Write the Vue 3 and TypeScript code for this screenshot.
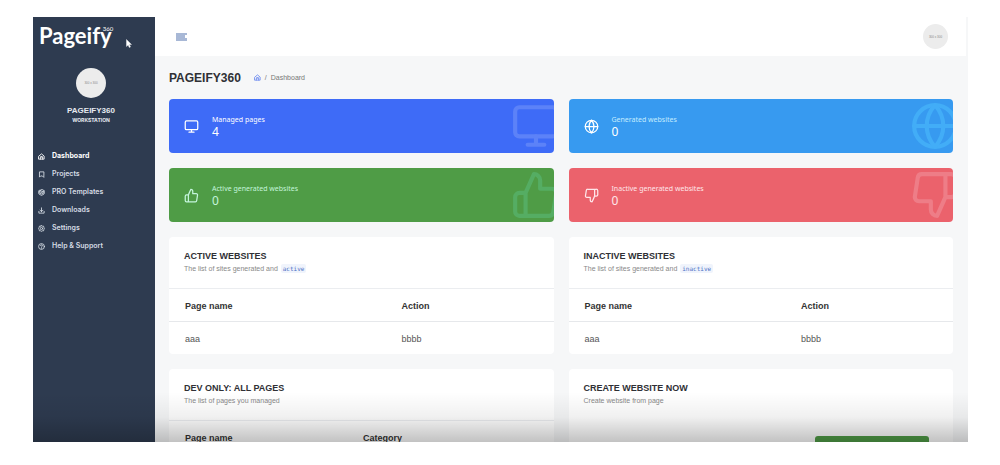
<script setup lang="ts">
interface NavItem {
  label: string
  icon: string
}

interface Stat {
  label: string
  value: number
  tone: string
  icon: string
}

interface Panel {
  title: string
  text: string
  code?: string
  columns?: string[]
  rows?: string[][]
  wide?: boolean
}

const icons: Record<string, string> = {
  home: '<path d="M3 10.5 12 3l9 7.500V21H3z"/><path d="M8 21v-5a4 4 0 0 1 8 0v5M9 14h6"/>',
  bookmark: '<path d="M19 21l-4-4H9l-4 4V3h14z"/>',
  box: '<path d="M12 2 3 7v10l9 5 9-5V7z"/><path d="M3 7l9 5 9-5M3 12l9 5 9-5M7 4.500l9 5"/>',
  download: '<path d="M3 15v6h18v-6"/><path d="M7 11l5 5 5-5M12 16V3"/>',
  settings:
    '<path d="M12 2l3 2 4 0 1 4 2 4-2 4-1 4-4 0-3 2-3-2-4 0-1-4-2-4 2-4 1-4 4 0z"/><circle cx="12" cy="12" r="4"/>',
  help: '<circle cx="12" cy="12" r="10"/><path d="M9 9a3 3 0 1 1 4 3c-1 .5-1 1-1 2M12 17v1"/>',
  monitor: '<rect x="2" y="3" width="20" height="14" rx="2"/><path d="M8 21h8M12 17v4"/>',
  globe:
    '<circle cx="12" cy="12" r="10"/><path d="M2 12h20M12 2a15.300 15.300 0 0 1 4 10 15.300 15.300 0 0 1-4 10 15.300 15.300 0 0 1-4-10 15.300 15.300 0 0 1 4-10z"/>',
  up: '<path d="M14 9V5a3 3 0 0 0-3-3l-4 9v11h11.280a2 2 0 0 0 2-1.700l1.380-9a2 2 0 0 0-2-2.300zM7 22H4a2 2 0 0 1-2-2v-7a2 2 0 0 1 2-2h3"/>',
  down: '<path d="M10 15v4a3 3 0 0 0 3 3l4-9V2H5.720a2 2 0 0 0-2 1.700l-1.380 9a2 2 0 0 0 2 2.300zM17 2h2.670A2.310 2.310 0 0 1 22 4v7a2.310 2.310 0 0 1-2.330 2H17"/>',
}

const nav: NavItem[] = [
  { label: 'Dashboard', icon: 'home' },
  { label: 'Projects', icon: 'bookmark' },
  { label: 'PRO Templates', icon: 'box' },
  { label: 'Downloads', icon: 'download' },
  { label: 'Settings', icon: 'settings' },
  { label: 'Help & Support', icon: 'help' },
]

const stats: Stat[] = [
  { label: 'Managed pages', value: 4, tone: 'blue', icon: 'monitor' },
  { label: 'Generated websites', value: 0, tone: 'sky', icon: 'globe' },
  { label: 'Active generated websites', value: 0, tone: 'green', icon: 'up' },
  { label: 'Inactive generated websites', value: 0, tone: 'red', icon: 'down' },
]

const panels: Panel[] = [
  {
    title: 'ACTIVE WEBSITES',
    text: 'The list of sites generated and',
    code: 'active',
    columns: ['Page name', 'Action'],
    rows: [['aaa', 'bbbb']],
  },
  {
    title: 'INACTIVE WEBSITES',
    text: 'The list of sites generated and',
    code: 'inactive',
    columns: ['Page name', 'Action'],
    rows: [['aaa', 'bbbb']],
  },
  {
    title: 'DEV ONLY: ALL PAGES',
    text: 'The list of pages you managed',
    columns: ['Page name', 'Category'],
    rows: [],
    wide: true,
  },
  { title: 'CREATE WEBSITE NOW', text: 'Create website from page' },
]
</script>

<template>
  <div class="stage">
    <div class="app">
      <aside class="sidebar">
        <a class="logo" href="#">Pageify<sup>360</sup></a>
        <div class="profile">
          <span class="avatar large">300 x 300</span>
          <strong class="name">PAGEIFY360</strong>
          <span class="role">WORKSTATION</span>
        </div>
        <nav class="nav">
          <a v-for="(item, i) in nav" :key="item.label" href="#" :class="{ active: i === 0 }">
            <svg class="line" viewBox="0 0 24 24" aria-hidden="true" v-html="icons[item.icon]"></svg>
            {{ item.label }}
          </a>
        </nav>
      </aside>

      <div class="main">
        <header class="topbar">
          <button class="menu" type="button" aria-label="Toggle menu">
            <svg viewBox="0 0 11 8" aria-hidden="true">
              <path d="M0 0h11v2H9v1h2v0H9v2h2v3H0z" opacity=".9" />
            </svg>
          </button>
          <span class="avatar">300 x 300</span>
        </header>

        <main class="content">
          <div class="heading">
            <h1>PAGEIFY360</h1>
            <nav class="crumbs" aria-label="Breadcrumb">
              <a href="#" aria-label="Home">
                <svg class="line" viewBox="0 0 24 24" aria-hidden="true" v-html="icons.home"></svg>
              </a>
              <span>/</span>
              <span>Dashboard</span>
            </nav>
          </div>

          <div class="grid">
            <section v-for="s in stats" :key="s.label" class="stat" :class="s.tone">
              <svg class="line small" viewBox="0 0 24 24" aria-hidden="true" v-html="icons[s.icon]"></svg>
              <div>
                <div class="label">{{ s.label }}</div>
                <div class="value">{{ s.value }}</div>
              </div>
              <svg class="line ghost" viewBox="0 0 24 24" aria-hidden="true" v-html="icons[s.icon]"></svg>
            </section>

            <section v-for="p in panels" :key="p.title" class="panel">
              <div class="panel-head" :class="{ ruled: p.columns }">
                <h2>{{ p.title }}</h2>
                <p>
                  {{ p.text }} <code v-if="p.code">{{ p.code }}</code>
                </p>
              </div>
              <table v-if="p.columns" :class="{ wide: p.wide }">
                <thead>
                  <tr>
                    <th v-for="c in p.columns" :key="c" scope="col">{{ c }}</th>
                  </tr>
                </thead>
                <tbody>
                  <tr v-for="(r, i) in p.rows" :key="i">
                    <td v-for="c in r" :key="c">{{ c }}</td>
                  </tr>
                </tbody>
              </table>
              <div v-else class="panel-action">
                <button class="create" type="button" aria-label="Create website"></button>
              </div>
            </section>
          </div>
        </main>
      </div>

      <div class="shade"></div>
      <svg class="pointer" viewBox="0 0 6 9" aria-hidden="true">
        <path d="M.5.5v7l1.600-1.400 1.200 2.400 1.200-.6-1.200-2.300h2.200z" />
      </svg>
    </div>
  </div>
</template>

<style>
body {
  background: #fff;
}
</style>

<style scoped>
.stage {
  box-sizing: border-box;
  height: 100vh;
  padding: 17px 32px 23px 33px;
  font-family: "Liberation Sans", Arial, sans-serif;
  color: #333;
}
.app {
  position: relative;
  display: flex;
  height: 100%;
  overflow: hidden;
  background: #f6f7f8;
}
a {
  color: inherit;
  text-decoration: none;
}
.line {
  fill: none;
  stroke: currentColor;
  stroke-width: 2;
  stroke-linecap: round;
  stroke-linejoin: round;
  flex: none;
}

/* Sidebar */
.sidebar {
  flex: none;
  width: 122px;
  background: #2e3b50;
  color: #e6eaf0;
}
.logo {
  display: flex;
  height: 39px;
  padding-left: 6px;
  font: 700 22px/37px Lato, sans-serif;
  color: #fff;
}
.logo sup {
  margin-left: -9px;
  font: 6px/24px Lato, sans-serif;
}
.profile {
  display: flex;
  flex-direction: column;
  align-items: center;
  padding: 12px 6px 22px 0;
}
.avatar {
  display: flex;
  align-items: center;
  justify-content: center;
  width: 25px;
  height: 25px;
  border-radius: 50%;
  background: #ececec;
  color: #888;
  font-size: 3px;
}
.avatar.large {
  width: 30px;
  height: 30px;
}
.name {
  margin-top: 8px;
  font-size: 8px;
  line-height: 10px;
}
.role {
  font: 700 5px/9px Inter, sans-serif;
}
.nav a {
  display: flex;
  align-items: center;
  gap: 7px;
  height: 18px;
  padding-left: 5px;
  font: 600 7px/18px Inter, sans-serif;
  color: #d5dbe4;
}
.nav a.active {
  font-weight: 700;
  color: #fff;
}
.nav svg {
  width: 7px;
  height: 7px;
  stroke-width: 3;
}

/* Main column */
.main {
  flex: 1;
  min-width: 0;
}
.topbar {
  display: flex;
  align-items: center;
  justify-content: space-between;
  height: 39px;
  margin-right: 2px;
  padding: 0 18px 0 21px;
  box-sizing: border-box;
  background: #fff;
}
.menu {
  display: flex;
  padding: 0;
  border: 0;
  background: none;
}
.menu svg {
  width: 11px;
  height: 8px;
  fill: #9fb0d2;
}
.content {
  padding: 0 15px 0 14px;
}
.heading {
  display: flex;
  align-items: center;
  gap: 13px;
  height: 43px;
}
h1 {
  margin: 0;
  font-size: 12px;
  line-height: 14px;
  color: #2f3035;
}
.crumbs {
  display: flex;
  align-items: center;
  gap: 4px;
  font-size: 7px;
  line-height: 10px;
  color: #777;
}
.crumbs a {
  display: flex;
  color: #6f8df0;
}
.crumbs svg {
  width: 7px;
  height: 7px;
  stroke-width: 3;
}
.grid {
  display: grid;
  grid-template-columns: 1fr 1fr;
  gap: 15px;
}

/* Stat cards */
.stat {
  position: relative;
  display: flex;
  align-items: center;
  gap: 13px;
  height: 54px;
  padding-left: 15px;
  border-radius: 4px;
  overflow: hidden;
  font-family: "Noto Sans", sans-serif;
  color: #fff;
}
.small {
  width: 15px;
  height: 15px;
}
.label {
  font-size: 7px;
  line-height: 12px;
}
.value {
  font-size: 12px;
  line-height: 12px;
}
.ghost {
  position: absolute;
  top: 2px;
  right: -7px;
  width: 50px;
  height: 50px;
}
.blue {
  background: #3e6bf7;
}
.blue .ghost {
  color: #5c82f8;
}
.sky {
  background: #379af0;
}
.sky .label {
  color: #c4ecff;
}
.sky .ghost {
  color: #42adf7;
}
.green {
  background: #4f9c46;
  color: #c4f5dc;
}
.green .ghost {
  color: #55ad63;
}
.red {
  background: #eb626c;
  color: #ffe6ea;
}
.red .ghost {
  color: #ee7d87;
}

/* Panels */
.panel {
  background: #fff;
  border-radius: 4px;
  overflow: hidden;
}
.panel-head {
  padding: 13px 15px;
}
.panel-head.ruled {
  border-bottom: 1px solid #ebedf0;
}
h2 {
  margin: 0 0 1px;
  font-size: 9px;
  line-height: 12px;
  color: #2f3035;
}
p {
  margin: 0;
  font-size: 7px;
  line-height: 12px;
  color: #888;
}
code {
  margin-left: 1px;
  padding: 1px 2px;
  border-radius: 2px;
  background: #f0f4fc;
  font: 6px/8px "DejaVu Sans Mono", monospace;
  color: #4c70c4;
}
table {
  width: 100%;
  border-collapse: collapse;
  table-layout: fixed;
}
th,
td {
  height: 30px;
  padding: 2px 16px 0;
  font-size: 9px;
  line-height: 12px;
  text-align: left;
}
th:first-child {
  width: 48%;
}
.wide th:first-child {
  width: 38%;
}
th {
  border-bottom: 1px solid #e6e8eb;
  color: #333;
}
td {
  color: #555;
}
.panel-action {
  display: flex;
  justify-content: flex-end;
  padding: 16px 24px;
}
.create {
  width: 114px;
  height: 24px;
  border: 0;
  border-radius: 3px;
  background: #4f9c46;
}

/* Layers above the page */
.shade {
  position: absolute;
  inset: auto 0 0;
  height: 50px;
  background: linear-gradient(transparent, rgba(0, 0, 0, 0.06) 50%, rgba(0, 0, 0, 0.24));
  pointer-events: none;
}
.pointer {
  position: absolute;
  top: 22px;
  left: 93px;
  width: 6px;
  height: 9px;
  fill: #fff;
  stroke: #fff;
  stroke-width: 0.4;
}
</style>
